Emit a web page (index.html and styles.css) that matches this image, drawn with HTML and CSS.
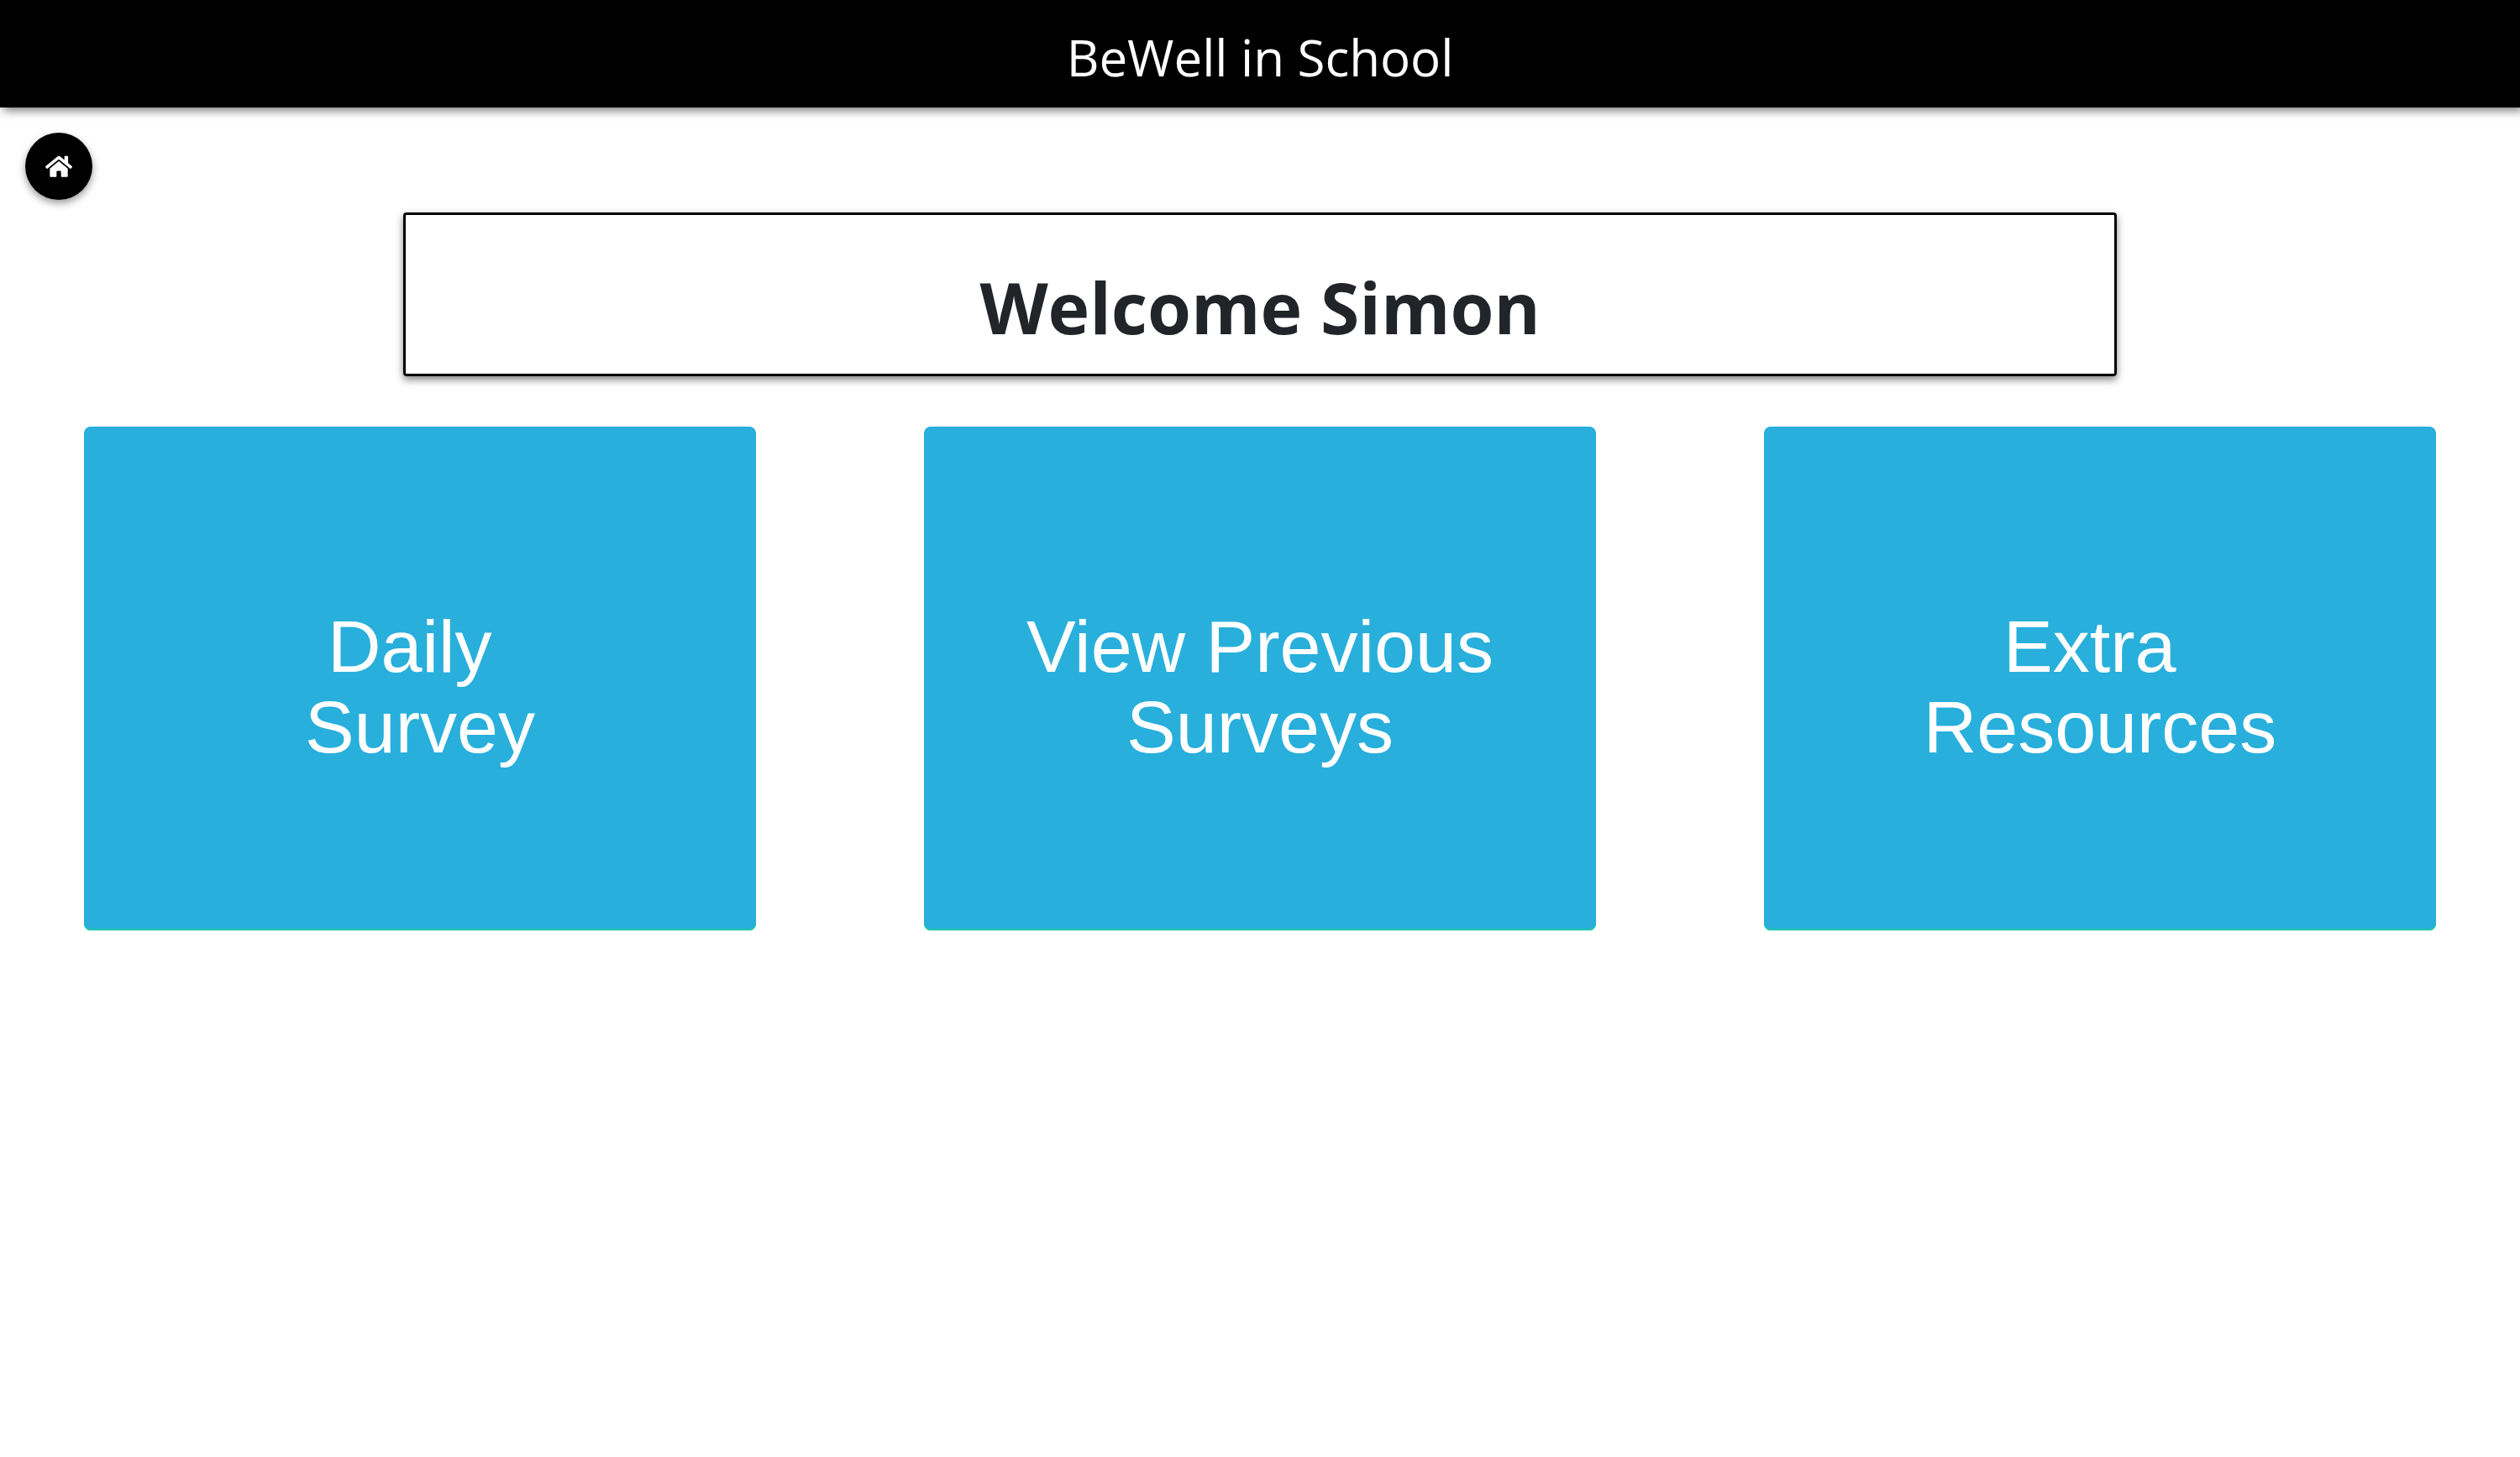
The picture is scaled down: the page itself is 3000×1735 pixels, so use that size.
FILE: index.html
```html
<!DOCTYPE html>
<html lang="en">
<head>
<meta charset="utf-8">
<meta name="viewport" content="width=device-width, initial-scale=1">
<title>BeWell in School</title>
<link rel="stylesheet" href="styles.css">
</head>
<body>
<header class="topbar">BeWell in School</header>
<nav class="nav">
  <a class="home" href="#" aria-label="Home">
    <svg class="home-icon" viewBox="0 0 576 512" aria-hidden="true"><path d="M280.37 148.26L96 300.11V464a16 16 0 0 0 16 16l112.06-.29a16 16 0 0 0 15.92-16V368a16 16 0 0 1 16-16h64a16 16 0 0 1 16 16v95.64a16 16 0 0 0 16 16.05L464 480a16 16 0 0 0 16-16V300L295.67 148.26a12.19 12.19 0 0 0-15.3 0zM571.6 251.47L488 182.56V44.05a12 12 0 0 0-12-12h-56a12 12 0 0 0-12 12v72.61L318.47 43a48 48 0 0 0-61 0L4.34 251.47a12 12 0 0 0-1.6 16.9l25.5 31A12 12 0 0 0 45.15 301l235.22-193.74a12.19 12.19 0 0 1 15.3 0L530.9 301a12 12 0 0 0 16.9-1.6l25.5-31a12 12 0 0 0-1.7-16.93z"/></svg>
  </a>
</nav>
<main>
  <section class="welcome"><h1>Welcome Simon</h1></section>
  <div class="cards">
    <button class="card" type="button">Daily&nbsp;<br>Survey</button>
    <button class="card" type="button">View Previous<br>Surveys</button>
    <button class="card" type="button">Extra&nbsp;<br>Resources</button>
  </div>
</main>
</body>
</html>
```
FILE: styles.css
```css
* { box-sizing: border-box; }

body {
  margin: 0;
  background: #fff;
  color: #212529;
  font-family: "Segoe UI", "Open Sans", sans-serif;
}

.topbar {
  padding: 28px 0 20px;
  background: #000;
  color: #fff;
  font-size: 60px;
  line-height: 80px;
  text-align: center;
  box-shadow: 4px 4px 10px rgba(0, 0, 0, 0.5);
}

.nav {
  display: flex;
  padding: 30px 30px 0;
}

.home {
  display: flex;
  align-items: center;
  justify-content: center;
  width: 80px;
  height: 80px;
  border-radius: 50%;
  background: #000;
  box-shadow: 0 4px 10px rgba(0, 0, 0, 0.4);
}

.home-icon {
  width: 32px;
  fill: #fff;
}

.welcome {
  width: 68%;
  margin: 15px auto 60px;
  padding: 50px 0 19px;
  border: 3px solid #000;
  border-radius: 4px;
  text-align: center;
  box-shadow: 0 4px 10px rgba(0, 0, 0, 0.5);
}

.welcome h1 {
  margin: 0;
  font-size: 84px;
  line-height: 120px;
}

.cards {
  display: grid;
  grid-template-columns: repeat(3, 1fr);
  gap: 200px;
  padding: 0 100px;
}

.card {
  min-height: 600px;
  padding: 20px 0 0;
  border: 0;
  border-radius: 8px;
  background: #28afdc;
  box-shadow: inset 0 -2px #20c9a6;
  color: #fff;
  font-family: Arial, "Liberation Sans", sans-serif;
  font-size: 88px;
  line-height: 96px;
  text-align: center;
}
```
